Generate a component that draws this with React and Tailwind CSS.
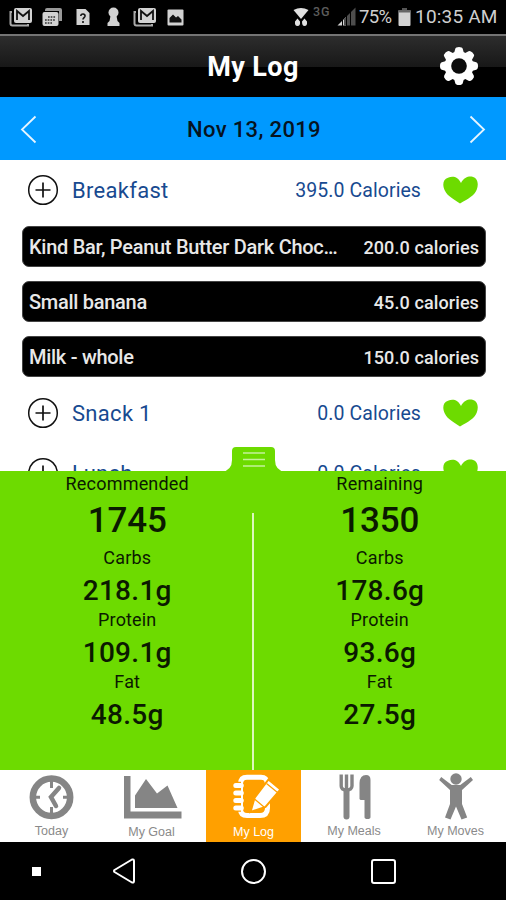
const meals = [
  {
    name: "Breakfast",
    calories: "395.0 Calories",
    items: [
      { name: "Kind Bar, Peanut Butter Dark Choc…", calories: "200.0 calories" },
      { name: "Small banana", calories: "45.0 calories" },
      { name: "Milk - whole", calories: "150.0 calories" },
    ],
  },
  { name: "Snack 1", calories: "0.0 Calories", items: [] },
  { name: "Lunch", calories: "0.0 Calories", items: [] },
];

const totals = [
  { label: "Recommended", calories: "1745", carbs: "218.1g", protein: "109.1g", fat: "48.5g" },
  { label: "Remaining", calories: "1350", carbs: "178.6g", protein: "93.6g", fat: "27.5g" },
];

function MailIcon() {
  return (
    <svg width="24" height="20" viewBox="0 0 24 20" fill="none">
      <path d="M3 5H1.5v11.5a2 2 0 0 0 2 2H19V17" stroke="#aaa" strokeWidth="2" />
      <rect x="5" y="1" width="18" height="15" rx="2" fill="#d2d2d2" />
      <path d="M8 13V4l6 5 6-5v9" stroke="#111" strokeWidth="1.8" />
    </svg>
  );
}

function CalendarIcon() {
  return (
    <svg width="21" height="20" viewBox="0 0 21 20">
      <path d="M5 1h13a2 2 0 0 1 2 2v11h-3V4H3V3a2 2 0 0 1 2-2Z" fill="#999" />
      <rect x="0.5" y="5" width="16" height="14" rx="2" fill="#d2d2d2" />
      <path d="M6 10h8M3 13h10M3 16h7" stroke="#333" strokeWidth="1.5" strokeDasharray="1.7 1" />
    </svg>
  );
}

function FileIcon() {
  return (
    <svg width="14" height="18" viewBox="0 0 14 18">
      <path d="M0.5 1h9L13.5 5v12H.5Z" fill="#d2d2d2" />
      <path d="M4.8 8c0-3 4.7-2.5 4.2.2C8.7 9.600 7 9.700 7 11.500M7 13v2" fill="none" stroke="#111" strokeWidth="1.6" />
    </svg>
  );
}

function KeyholeIcon() {
  return (
    <svg width="13" height="20" viewBox="0 0 13 20" fill="#d2d2d2">
      <circle cx="6.5" cy="5.5" r="5" />
      <path d="M3.500 9h6l1 5 2 2v3H.5v-3l2-2Z" />
    </svg>
  );
}

function PictureIcon() {
  return (
    <svg width="17" height="17" viewBox="0 0 17 17">
      <rect x="0.5" y="0.5" width="16" height="16" rx="1" fill="#d2d2d2" />
      <path d="M2.5 13.500V9L6 5.500l3 3 2-1.500 3.500 3.500v3Z" fill="#111" />
    </svg>
  );
}

function StatusBar() {
  return (
    <div className="h-[34px] shrink-0 bg-black text-[#cfcfcf]">
      <div className="flex items-center pl-[9px] pt-[7px]">
        <MailIcon />
        <div className="ml-[9px]"><CalendarIcon /></div>
        <div className="ml-[13px]"><FileIcon /></div>
        <div className="ml-[17px]"><KeyholeIcon /></div>
        <div className="ml-[13px]"><MailIcon /></div>
        <div className="ml-[10px]"><PictureIcon /></div>
        <svg className="ml-[109px]" width="16" height="20" viewBox="0 0 16 20" fill="#e0e0e0">
          <path d="M0.5 3Q8-1 15.500 3L8 12Z" />
          <path d="M4.500 11.500 7 14.500Q7.500 19 4.500 19T2 14.500ZM11.500 19Q9 19 9 14.500l2.500-3 2.500 3Q14.500 19 11.500 19Z" />
        </svg>
        <span className="-mt-[10px] ml-[4px] w-[21px] whitespace-nowrap text-[12.5px] font-medium leading-[14px] tracking-[0.8px] text-[#5c5c5c]">3G</span>
        <svg className="ml-[3px]" width="19" height="20" viewBox="0 0 19 20">
          <path d="M0.5 18.500 9 10v8.500Z" fill="#d2d2d2" />
          <path d="M7 12 18.500 0.500v18H7Z" fill="#4d4d4d" />
          <path d="M5.500 10v9M9.500 7v12M13.500 4v15" stroke="#000" strokeWidth="1" />
        </svg>
        <span className="ml-[3px] w-[34px] whitespace-nowrap text-[18.500px] leading-5 tracking-[-0.600px]">75%</span>
        <svg className="ml-[5px]" width="13" height="20" viewBox="0 0 13 20">
          <path d="M4 1h5v3H4Z" fill="#555" />
          <rect x="0.5" y="3" width="12" height="16" rx="1" fill="#d2d2d2" />
          <path d="M0.5 3h12v2.500H.5Z" fill="#666" />
        </svg>
        <span className="ml-[4px] whitespace-nowrap text-[19px] leading-5 tracking-[0.200px]">10:35 AM</span>
      </div>
    </div>
  );
}

function GearIcon() {
  return (
    <svg width="38" height="40" viewBox="-19 -20 38 40">
      <g fill="#fff">
        <circle r="14.5" />
        {[0, 45, 90, 135, 180, 225, 270, 315].map((angle) => (
          <path key={angle} d="M-5.200-12 -3.700-17.200Q-3.300-19 0-19T3.700-17.200L5.200-12Z" transform={`rotate(${angle})`} />
        ))}
      </g>
      <circle r="7.8" fill="#0b0b0b" />
    </svg>
  );
}

function Header() {
  return (
    <header className="h-[63px] shrink-0 border-t-2 border-[#747474] bg-black">
      <div className="h-[31px] bg-linear-to-b from-[#2d2d2d] to-[#181818]">
        <div className="grid h-[61px] grid-cols-[1fr_auto_1fr] items-center text-white">
          <span />
          <h1 className="pt-px text-[27px] font-bold leading-[32px] tracking-[0.4px]">My Log</h1>
          <button type="button" aria-label="Settings" className="-mt-[2px] mr-[28px] justify-self-end"><GearIcon /></button>
        </div>
      </div>
    </header>
  );
}

function DateBar() {
  return (
    <div className="flex h-[63px] shrink-0 items-center justify-between bg-[#0099ff] px-[20px] pt-[3px]">
      <svg width="18" height="30" viewBox="0 0 18 30" fill="none" stroke="#e6f5ff" strokeWidth="1.8">
        <path d="M15.500 1.500 2 14.500l13.500 13" />
      </svg>
      <span className="pl-[2px] text-[22px] font-medium leading-7 tracking-[0.350px] text-[#06131f]">Nov 13, 2019</span>
      <svg width="18" height="30" viewBox="0 0 18 30" fill="none" stroke="#e6f5ff" strokeWidth="1.8">
        <path d="M2.500 1.500 16 14.500l-13.500 13" />
      </svg>
    </div>
  );
}

function Heart() {
  return (
    <svg width="36" height="28" viewBox="0 0 36 28">
      <path d="M18 7C21 1 26 0 29.500.8c5 1.200 6.500 7.200 4.200 13C31.500 19.500 25 23 17 27.500 11 23 4.500 20.500 1.800 14.500-.8 9-.2 3.300 5 1.700 10-.3 15 .8 18 7Z" fill="#6ddb00" />
    </svg>
  );
}

function MealRow({ meal }) {
  return (
    <div className="flex h-[60px] items-center pl-[27px] pr-[27px] text-[#184a90]">
      <svg width="32" height="32" viewBox="0 0 32 32" fill="none" stroke="#111">
        <circle cx="16" cy="16" r="14.3" strokeWidth="1.5" />
        <path d="M8.500 16h15M16 8.500v15" strokeWidth="1.7" />
      </svg>
      <span className="ml-[13px] mt-[2px] text-[22px] leading-7 tracking-[0.300px]">{meal.name}</span>
      <span className="ml-auto mt-[2px] text-[19.500px] leading-7 tracking-[0.070px]">{meal.calories}</span>
      <div className="ml-[22px]"><Heart /></div>
    </div>
  );
}

function MealList() {
  return (
    <main className="h-[311px] shrink-0 overflow-hidden bg-white">
      {meals.map((meal) => (
        <section key={meal.name}>
          <MealRow meal={meal} />
          {meal.items.length > 0 && (
            <ul className="flex flex-col gap-[14px] py-[6px] pl-[22px] pr-[20px]">
              {meal.items.map((item) => (
                <li key={item.name} className="flex h-[41px] items-center justify-between rounded-[7px] border border-[#444] bg-black px-[6px] pt-px font-medium text-[#e8e8e8]">
                  <span className="text-[20px] tracking-[-0.280px]">{item.name}</span>
                  <span className="text-[18px] tracking-[0.100px]">{item.calories}</span>
                </li>
              ))}
            </ul>
          )}
        </section>
      ))}
    </main>
  );
}

function Macro({ label, value }) {
  return (
    <>
      <p className="h-7 text-[18px] leading-[28px] tracking-[0.150px]">{label}</p>
      <p className="h-[34px] text-[28px] font-medium leading-[37px] tracking-[0.300px]">{value}</p>
    </>
  );
}

function TotalsPanel() {
  return (
    <section className="relative h-[299px] shrink-0 bg-[#6ddb00]">
      {/* pull tab that sits over the list */}
      <svg className="absolute -top-[24px] left-[222px]" width="63" height="25" viewBox="0 0 63 25">
        <path d="M0 25Q10 23 10 13V4q0-4 4-4h35q4 0 4 4v9q0 10 10 12Z" fill="#6ddb00" />
        <path d="M21 6h22M21 12.500h22M21 19h22" stroke="#c4f29a" strokeWidth="1.5" />
      </svg>
      <div className="grid grid-cols-2 pl-px text-center text-[#0b1a00]">
        {totals.map((total) => (
          <div key={total.label}>
            <p className="h-[25px] text-[18px] leading-[26px] tracking-[0.200px]">{total.label}</p>
            <p className="h-12 text-[35px] font-medium leading-[50px] tracking-[-0.100px]">{total.calories}</p>
            <Macro label="Carbs" value={total.carbs} />
            <Macro label="Protein" value={total.protein} />
            <Macro label="Fat" value={total.fat} />
          </div>
        ))}
      </div>
      <div className="absolute bottom-0 left-[252px] h-[257px] w-[2px] bg-[#dcf8bd]" />
    </section>
  );
}

function TodayIcon() {
  return (
    <svg width="103" height="52" viewBox="0 0 103 52" fill="none" stroke="#858585">
      <circle cx="51.5" cy="27.3" r="18.7" strokeWidth="6.5" />
      <path d="M51.500 11v7M51.500 37v6M35 27.300h5M63 27.300h5" strokeWidth="3" />
      <path d="m59 18-8 9 5 9" strokeWidth="4.5" strokeLinecap="round" />
    </svg>
  );
}

function GoalIcon() {
  return (
    <svg width="103" height="52" viewBox="0 0 103 52" fill="#858585">
      <path d="M21 6h6.500v35.500H78.500V48.500H21Z" />
      <path d="M32 38V25.500L43 9l11 14.500 10.500-8L74.500 38Z" />
    </svg>
  );
}

function LogIcon() {
  return (
    <svg width="95" height="52" viewBox="0 0 95 52" fill="none" stroke="#fff">
      <path d="M61.500 14C61 9 59 7.200 55 7.200H41Q34.500 7.200 34.500 14V39Q34.500 45.500 41 45.500H54Q61.500 45.500 61.500 38V33" strokeWidth="5" />
      <path d="M27 15.500h8M27 23h8M27 30.500h8M27 38h8" stroke="#ffa000" strokeWidth="7.5" />
      <path d="M29.800 15.500h5.500M29.800 23h5.500M29.800 30.500h5.500M29.800 38h5.500" strokeWidth="5" strokeLinecap="round" />
      <path d="M44.500 42 48.500 28 62.500 9.500 74.500 19.500 59.500 37Z" fill="#fff" stroke="#ffa000" strokeWidth="2" />
      <path d="m60.500 13.500 11 9M48.500 29 58 37" stroke="#ffa000" strokeWidth="1.2" />
    </svg>
  );
}

function MealsIcon() {
  return (
    <svg width="104" height="52" viewBox="0 0 104 52" fill="none" stroke="#858585">
      <path d="M40.200 4.500V16Q40.200 20 45.500 20T51 16V4.500M45.500 4.500V20" strokeWidth="3.4" />
      <path d="M45.500 21v25.500" strokeWidth="6" strokeLinecap="round" />
      <path d="M58.500 29V13Q59 5 65 5q4.500 0 4.500 5v37q0 2-3 2t-3-2V30h-4Z" fill="#858585" stroke="none" />
    </svg>
  );
}

function MovesIcon() {
  return (
    <svg width="101" height="52" viewBox="0 0 101 52" fill="#858585">
      <circle cx="51" cy="9" r="5.7" />
      <path d="m36.200 7 10.500 8h8.600l10.500-8 2.200 3-11 10v14l5.200 13.500-5.700 2L51 36.500 45.500 49.500l-5.500-2L45 34V20L34.200 10Z" />
    </svg>
  );
}

const tabs = [
  { label: "Today", Icon: TodayIcon, className: "w-[103px] text-[#8a8a8a]", labelClass: "mt-[2px]" },
  { label: "My Goal", Icon: GoalIcon, className: "w-[103px] text-[#8a8a8a]", labelClass: "mt-[3px] -ml-[6px]" },
  { label: "My Log", Icon: LogIcon, className: "w-[95px] bg-[#ffa000] text-white", labelClass: "mt-[3px]" },
  { label: "My Meals", Icon: MealsIcon, className: "w-[104px] text-[#8a8a8a]", labelClass: "mt-[2px] ml-[2px]" },
  { label: "My Moves", Icon: MovesIcon, className: "w-[101px] text-[#8a8a8a]", labelClass: "mt-[2px]" },
];

function TabBar() {
  return (
    <nav className="flex h-[72px] shrink-0 bg-white">
      {tabs.map(({ label, Icon, className, labelClass }) => (
        <button key={label} type="button" className={`flex flex-col items-center font-['Liberation_Sans',Arial,sans-serif] ${className}`}>
          <Icon />
          <span className={`text-[12.5px] leading-[14px] ${labelClass}`}>{label}</span>
        </button>
      ))}
    </nav>
  );
}

function SystemNav() {
  return (
    <div className="flex h-[58px] shrink-0 items-center bg-black">
      <div className="ml-[32px] mt-px size-[9px] bg-white" />
      <svg className="ml-[71px]" width="25" height="28" viewBox="0 0 25 28" fill="none" stroke="#fff" strokeWidth="2" strokeLinejoin="round">
        <path d="M20 2.500 2.500 13Q1.500 14 2.500 15L20 25.500q2 .5 2-1.500V4q0-2-2-1.500Z" />
      </svg>
      <div className="ml-[104px] size-[25px] rounded-full border-2 border-white" />
      <div className="ml-[105px] size-[25px] rounded-[3px] border-2 border-white" />
    </div>
  );
}

export default function App() {
  return (
    <div className="flex h-[900px] w-[506px] flex-col overflow-hidden bg-white font-[Roboto,sans-serif]">
      <StatusBar />
      <Header />
      <DateBar />
      <MealList />
      <TotalsPanel />
      <TabBar />
      <SystemNav />
    </div>
  );
}
